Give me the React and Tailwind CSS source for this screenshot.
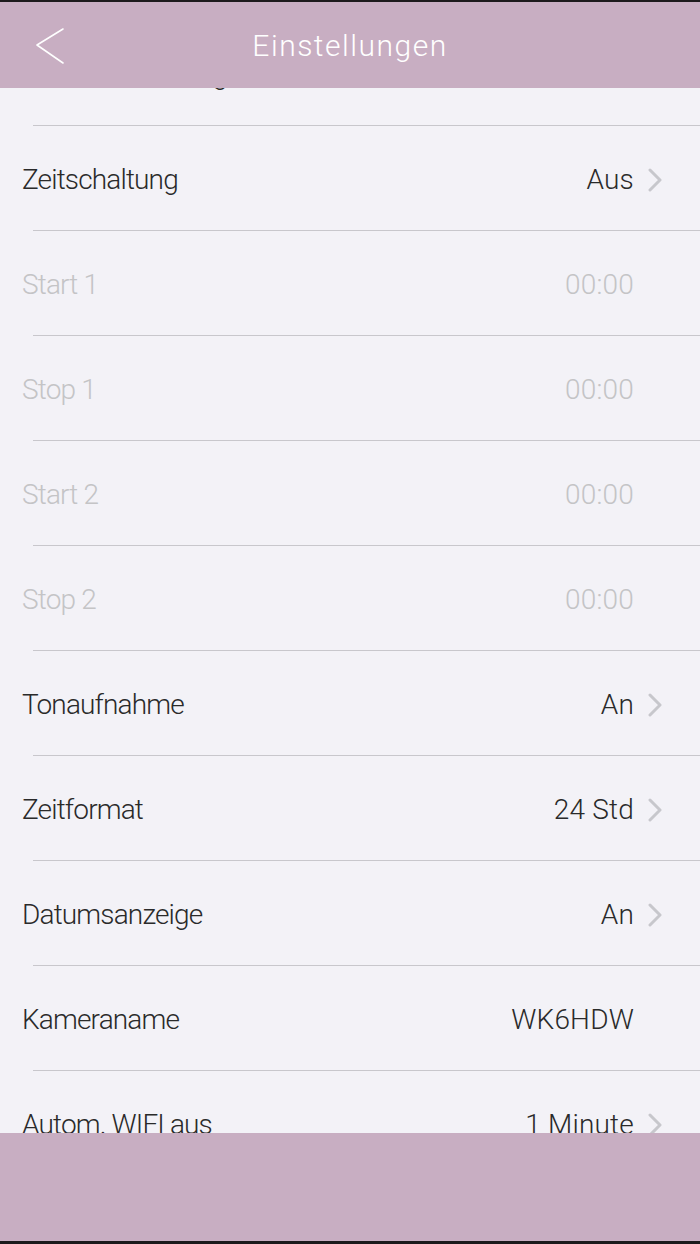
const rows = [
  { label: 'Kameraauflösung', value: 'HD', chevron: true },
  { label: 'Zeitschaltung', value: 'Aus', chevron: true },
  { label: 'Start 1', value: '00:00', muted: true },
  { label: 'Stop 1', value: '00:00', muted: true },
  { label: 'Start 2', value: '00:00', muted: true },
  { label: 'Stop 2', value: '00:00', muted: true },
  { label: 'Tonaufnahme', value: 'An', chevron: true },
  { label: 'Zeitformat', value: '24 Std', chevron: true },
  { label: 'Datumsanzeige', value: 'An', chevron: true },
  { label: 'Kameraname', value: 'WK6HDW' },
  { label: 'Autom. WIFI aus', value: '1 Minute', chevron: true },
  { label: 'Werkseinstellungen', value: '', chevron: true },
]

function Chevron() {
  return (
    <svg width="14" height="24" viewBox="0 0 14 24" fill="none">
      <path d="M2 2 L12 12 L2 22" stroke="#c7c7cc" strokeWidth="3" strokeLinecap="round" strokeLinejoin="round" />
    </svg>
  )
}

function Row({ label, value, chevron, muted }) {
  const color = muted ? 'text-[#c4c4c6]' : 'text-[#2a2a2a]'
  return (
    <div>
      <div className="h-[104px] flex items-center pl-[22px] pr-[38px] pt-[3px]">
        <span className={`flex-1 text-[28px] font-light tracking-[-0.85px] ${color}`}>{label}</span>
        <span className={`text-[28px] font-light tracking-[0.2px] ${color}`}>{value}</span>
        <span className="w-[28px] flex justify-end">{chevron && <Chevron />}</span>
      </div>
      <div className="ml-[33px] h-px bg-[#c8c7cc]" />
    </div>
  )
}

export default function App() {
  return (
    <div className="h-[1244px] flex flex-col bg-[#f3f2f7] overflow-hidden" style={{ fontFamily: 'Roboto, "Liberation Sans", sans-serif' }}>
      {/* header */}
      <div className="border-t-2 border-[#1c1a1c] bg-[#c8aec2] h-[88px] shrink-0 relative flex items-center justify-center">
        <button className="absolute left-[35px] top-[24px]">
          <svg width="30" height="40" viewBox="0 0 30 40" fill="none">
            <path d="M28 3 L2 19 L28 37" stroke="#ffffff" strokeWidth="1.6" strokeLinecap="round" strokeLinejoin="round" />
          </svg>
        </button>
        <h1 className="text-white text-[30px] font-light tracking-[1.5px]">Einstellungen</h1>
      </div>

      {/* list */}
      <div className="flex-1 overflow-hidden">
        <div className="-mt-[67px]">
          {rows.map((r) => (
            <Row key={r.label} {...r} />
          ))}
        </div>
      </div>

      {/* bottom bar */}
      <div className="h-[111px] shrink-0 bg-[#c8aec2] border-b-[3px] border-[#1c1a1c]" />
    </div>
  )
}
